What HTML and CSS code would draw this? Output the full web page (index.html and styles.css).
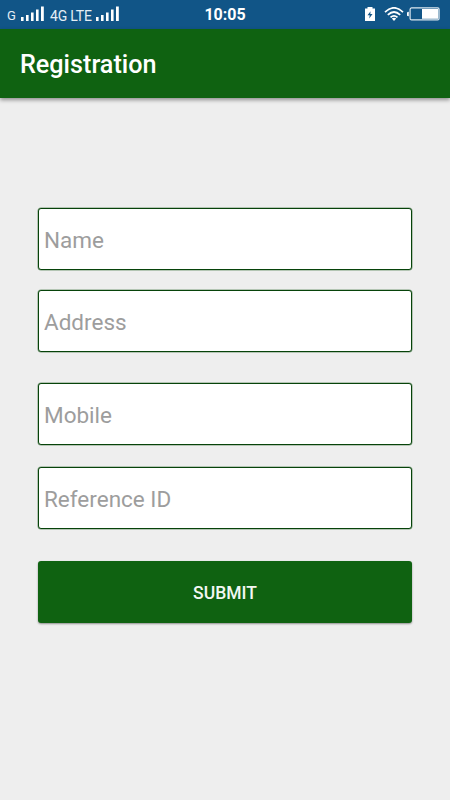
FILE: index.html
```html
<!DOCTYPE html>
<html lang="en">
<head>
<meta charset="utf-8">
<title>Registration</title>
<link rel="stylesheet" href="styles.css">
</head>
<body>
<div class="status">
  <div class="network">
    <span class="net-g">G</span>
    <svg class="signal" width="24" height="15" viewBox="0 0 24 15"><path d="M0 11h2.600v4H0zM5 9h2.600v6H5zM10 6.500h2.600v8.500H10zM15 3.500h2.600V15H15zM20 .6h2.800V15H20z"/></svg>
    <span class="net-lte">4G LTE</span>
    <svg class="signal" width="24" height="15" viewBox="0 0 24 15"><path d="M0 11h2.600v4H0zM5 9h2.600v6H5zM10 6.500h2.600v8.500H10zM15 3.500h2.600V15H15zM20 .6h2.800V15H20z"/></svg>
  </div>
  <div class="clock">10:05</div>
  <div class="power">
    <svg class="charge" width="10" height="15" viewBox="0 0 10 15"><path fill="#fff" d="M2.500 0h5v1.500H10V14H0V1.500h2.500z"/><path fill="#115587" d="M5.600 4.200 2.500 8.300h2.200L4.200 11.500 7.500 7H5.300z"/></svg>
    <svg class="wifi" width="20" height="15" viewBox="0 0 20 15"><g fill="none" stroke="#fff" stroke-width="1.7"><path d="M1 5.200Q10-3.600 19 5.200M3.800 7.900q6.200-5.800 12.400 0M6.500 10.400q3.500-3.100 7 0"/></g><path fill="#fff" d="M7.800 11.600q2.200-1.700 4.400 0L10 14z"/></svg>
    <svg class="battery" width="33" height="14" viewBox="0 0 33 14"><path fill="#fff" d="M0 5.500Q0 5 1.800 4.800v4.400Q0 9 0 8.500z"/><rect x="3.100" y=".9" width="29" height="12" rx="1.5" fill="none" stroke="#dce7ef" stroke-width="1.2"/><path fill="#fff" d="M15 2h16.300v9.800H15z"/></svg>
  </div>
</div>
<header class="appbar"><h1>Registration</h1></header>
<form class="form">
  <input class="field" type="text" placeholder="Name">
  <input class="field address" type="text" placeholder="Address">
  <input class="field mobile" type="text" placeholder="Mobile">
  <input class="field reference" type="text" placeholder="Reference ID">
  <button class="submit" type="button">SUBMIT</button>
</form>
</body>
</html>
```
FILE: styles.css
```css
* { box-sizing: border-box; }
body {
  margin: 0;
  height: 800px;
  overflow: hidden;
  background: #eee;
  font-family: Roboto, sans-serif;
}
.status {
  display: grid;
  grid-template-columns: 1fr auto 1fr;
  height: 29px;
  padding: 0 10px 0 7px;
  background: #115587;
  color: #fff;
}
.network { display: flex; align-items: flex-start; padding-top: 6px; }
.network span { line-height: 20px; white-space: nowrap; color: #e5eef5; }
.net-g { width: 14px; font-size: 13px; }
.net-lte { width: 46px; font-size: 14px; letter-spacing: -.2px; }
.signal { flex: none; fill: #fff; }
.net-g + .signal { margin-right: 5px; }
.clock {
  padding-left: 3px;
  font-size: 16px;
  font-weight: 700;
  line-height: 29px;
}
.power { display: flex; justify-content: flex-end; padding-top: 7px; }
.wifi { margin: 0 3px 0 9px; }
.appbar {
  height: 69px;
  padding-left: 20px;
  background: #0f6211;
  box-shadow: 0 2px 4px rgba(0, 0, 0, .4);
}
.appbar h1 {
  margin: 0;
  color: #fff;
  font-size: 25.2px;
  font-weight: 500;
  line-height: 71px;
}
.form {
  display: flex;
  flex-direction: column;
  padding: 110px 38px 0;
}
.field {
  height: 62px;
  padding: 2px 5px 0;
  border: 1px solid #07430a;
  border-radius: 3px;
  background: #fff;
  box-shadow: 0 0 0 .5px rgba(7, 75, 10, .5);
  color: #333;
  font: 400 22.5px Roboto, sans-serif;
  outline: none;
}
.field::placeholder { color: #9d9d9d; opacity: 1; }
.address { margin-top: 20px; }
.mobile { margin-top: 31px; }
.reference { margin-top: 22px; }
.submit {
  height: 62px;
  margin-top: 32px;
  padding: 2px 0 0;
  border: 0;
  border-radius: 3px;
  background: #0f6211;
  box-shadow: 0 1px 2px rgba(0, 0, 0, .4);
  color: #f3f7f3;
  font: 500 17.500px Roboto, sans-serif;
}
```
